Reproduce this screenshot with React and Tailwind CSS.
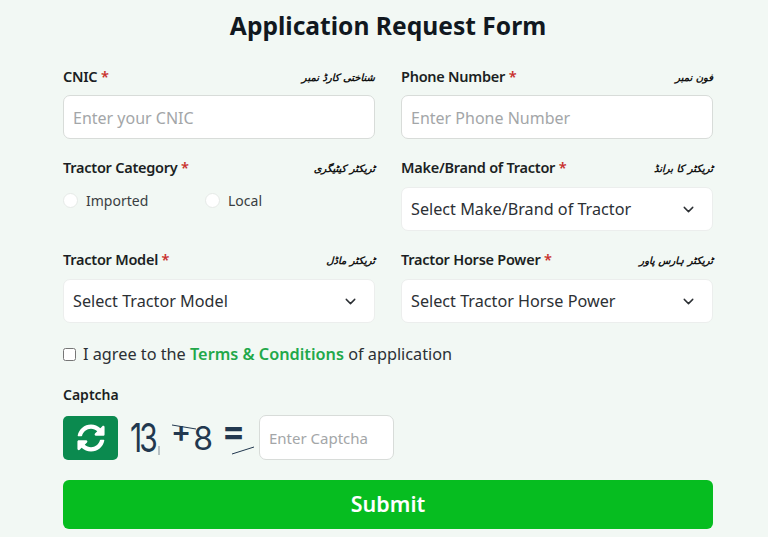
import React from 'react';
import { ChevronDown } from 'lucide-react';
import { FaSyncAlt } from 'react-icons/fa';

const FieldLabel = ({ label, urdu, required = true }) => (
    <div className="flex items-center justify-between h-[24px]">
        <span className="text-[14.5px] font-semibold text-[#1b1f23] tracking-[-0.25px]">
            {label}
            {required && <span className="text-[#c9302c]"> *</span>}
        </span>
        <span dir="rtl" lang="ur" className="pl-[1px] text-[10px] font-bold italic text-[#111] font-['DejaVu_Sans',sans-serif]">
            {urdu}
        </span>
    </div>
);

const TextInput = ({ placeholder }) => (
    <input
        placeholder={placeholder}
        className="mt-[6px] block w-full h-[44px] pt-[1px] px-[9px] bg-white border border-[#d8dcd9] rounded-[7px] text-[16px] placeholder:text-[#a3a6a8] outline-none"
    />
);

const SelectBox = ({ text }) => (
    <div className="mt-[7px] flex items-center justify-between h-[44px] pl-[9px] pr-[15px] bg-white border border-[#eceeed] rounded-[7px] text-[16.2px] text-[#2c3034]">
        <span>{text}</span>
        <ChevronDown size={17} strokeWidth={2} className="text-[#2c3034]" />
    </div>
);

const Radio = ({ label, className }) => (
    <label className={`flex items-center gap-[8px] text-[14px] text-[#3a3e42] ${className}`}>
        <span className="w-[15px] h-[15px] rounded-full bg-white border border-[#e6eae7]" />
        {label}
    </label>
);

const CaptchaImage = () => (
    <div className="relative flex items-center w-[141px] h-[44px] pl-[12px] text-[#22384f] font-['Inter',sans-serif] leading-none">
        <span className="w-[30px] text-[40px] font-normal tracking-[-4px] origin-left scale-x-[0.75]">13</span>
        <span className="ml-[11px] -mt-[14px] text-[30px] font-semibold">+</span>
        <span className="ml-[2px] mt-[1px] text-[32px] font-normal">8</span>
        <span className="ml-[9px] -mt-[14px] text-[34px] font-bold">=</span>
        {/* noise lines */}
        <svg className="absolute left-0 top-0" width="141" height="44" fill="none">
            <path d="M54 9 L78 13" stroke="#22384f" strokeWidth="1" />
            <path d="M41 30 L41 39" stroke="#7d8a96" strokeWidth="1" />
            <path d="M114 38 L136 31" stroke="#22384f" strokeWidth="1" />
        </svg>
    </div>
);

export default function App() {
    return (
        <div className="h-[537px] overflow-hidden bg-[#f2f8f4] font-['Noto_Sans',sans-serif]">
            <div className="w-[650px] ml-[63px]">
                <h1 className="pt-[6px] h-[65px] text-center text-[24.6px] leading-[40px] font-bold text-[#11181f]">
                    Application Request Form
                </h1>

                <div className="grid grid-cols-2 gap-x-[26px]">
                    <div>
                        <FieldLabel label="CNIC" urdu="شناختی کارڈ نمبر" />
                        <TextInput placeholder="Enter your CNIC" />
                    </div>
                    <div>
                        <FieldLabel label="Phone Number" urdu="فون نمبر" />
                        <TextInput placeholder="Enter Phone Number" />
                    </div>

                    <div className="mt-[17px]">
                        <FieldLabel label="Tractor Category" urdu="ٹریکٹر کیٹیگری" />
                        <div className="mt-[4px] flex items-center h-[32px]">
                            <Radio label="Imported" className="w-[142px]" />
                            <Radio label="Local" />
                        </div>
                    </div>
                    <div className="mt-[17px]">
                        <FieldLabel label="Make/Brand of Tractor" urdu="ٹریکٹر کا برانڈ" />
                        <SelectBox text="Select Make/Brand of Tractor" />
                    </div>

                    <div className="mt-[17px]">
                        <FieldLabel label="Tractor Model" urdu="ٹریکٹر ماڈل" />
                        <SelectBox text="Select Tractor Model" />
                    </div>
                    <div className="mt-[17px]">
                        <FieldLabel label="Tractor Horse Power" urdu="ٹریکٹر ہارس پاور" />
                        <SelectBox text="Select Tractor Horse Power" />
                    </div>
                </div>

                {/* Terms */}
                <label className="mt-[20px] flex items-center gap-[7px] h-[22px] text-[16.25px] text-[#2c3034]">
                    <input type="checkbox" className="w-[13px] h-[13px]" />
                    <span>
                        I agree to the <span className="font-semibold text-[#22a84a]">Terms &amp; Conditions</span> of application
                    </span>
                </label>

                {/* Captcha */}
                <div className="mt-[19px] h-[22px] text-[14px] font-semibold text-[#1b1f23]">Captcha</div>
                <div className="mt-[9px] flex items-end h-[45px]">
                    <button className="flex items-center justify-center w-[55px] h-[44px] bg-[#0b8a4f] rounded-[5px]">
                        <FaSyncAlt size={28} className="text-white" />
                    </button>
                    <CaptchaImage />
                    <input
                        placeholder="Enter Captcha"
                        className="w-[135px] h-[45px] px-[9px] bg-white border border-[#d8dcd9] rounded-[7px] text-[15px] placeholder:text-[#a3a6a8] outline-none"
                    />
                </div>

                <button className="mt-[20px] w-full h-[49px] bg-[#06bd20] rounded-[6px] text-white text-[21.5px] font-semibold">
                    Submit
                </button>
            </div>
        </div>
    );
}
